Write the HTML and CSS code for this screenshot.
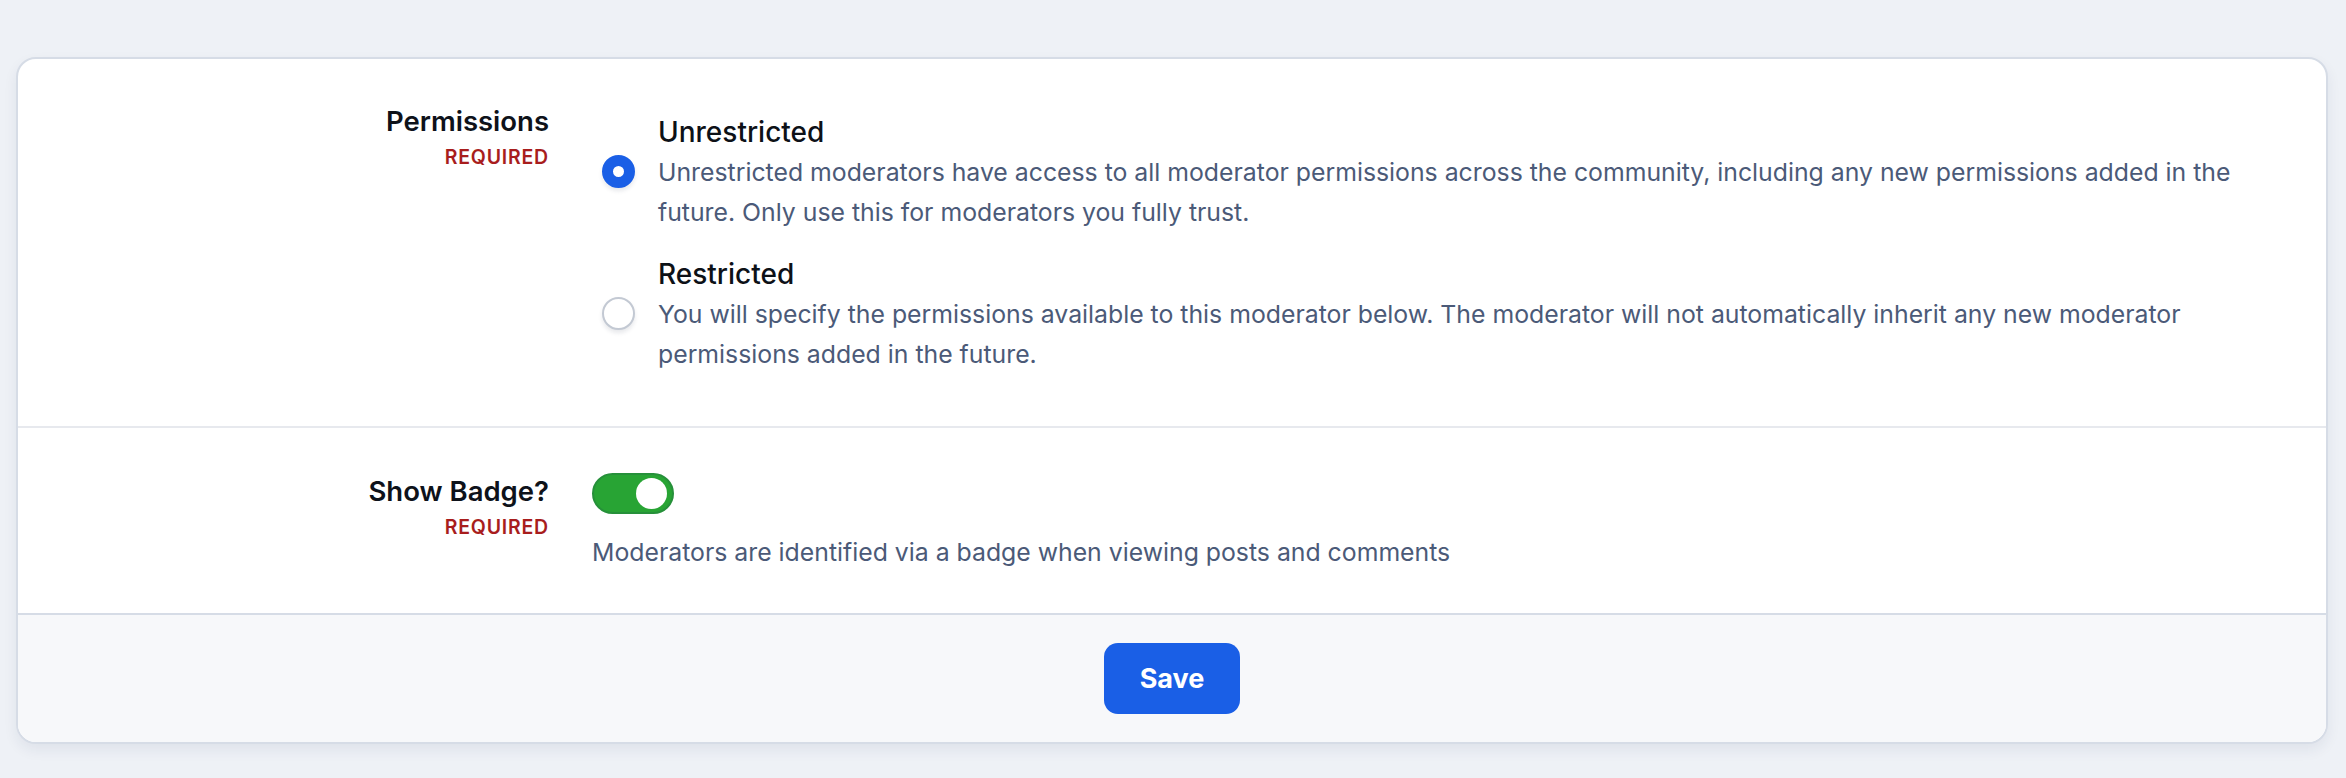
FILE: index.html
```html
<!DOCTYPE html>
<html lang="en">
<head>
<meta charset="utf-8">
<title>Moderator permissions</title>
<link rel="stylesheet" href="styles.css">
</head>
<body>
<div class="page">
  <form class="card">
    <div class="section">
      <div class="label-col">
        <div class="label">Permissions</div>
        <div class="required">Required</div>
      </div>
      <div class="control-col options">
        <label class="option">
          <div class="option-title">Unrestricted</div>
          <span class="radio radio-on"></span>
          <div class="desc">Unrestricted moderators have access to all moderator permissions across the community, including any new permissions added in the future. Only use this for moderators you fully trust.</div>
        </label>
        <label class="option">
          <div class="option-title">Restricted</div>
          <span class="radio"></span>
          <div class="desc">You will specify the permissions available to this moderator below. The moderator will not automatically inherit any new moderator permissions added in the future.</div>
        </label>
      </div>
    </div>
    <div class="section section-badge">
      <div class="label-col">
        <div class="label">Show Badge?</div>
        <div class="required">Required</div>
      </div>
      <div class="control-col">
        <span class="toggle"><span class="knob"></span></span>
        <div class="desc toggle-desc">Moderators are identified via a badge when viewing posts and comments</div>
      </div>
    </div>
    <div class="footer">
      <button type="button" class="save">Save</button>
    </div>
  </form>
</div>
</body>
</html>
```

FILE: styles.css
```css
* { box-sizing: border-box; }
html, body { margin: 0; padding: 0; }
body {
  background: #eef1f6;
  font-family: Inter, "Noto Sans", "Liberation Sans", sans-serif;
  width: 2346px;
  height: 778px;
  overflow: hidden;
}
.page {
  padding: 57px 18px 0 16px;
}
.card {
  background: #ffffff;
  border: 2px solid #d6dce6;
  border-radius: 20px;
  box-shadow: 0 6px 14px rgba(30, 45, 80, 0.07);
  overflow: hidden;
}
.section {
  display: grid;
  grid-template-columns: 531px 1fr;
  column-gap: 43px;
  padding: 44px 76px 52px 0;
  border-bottom: 2px solid #e7e9ee;
}
.section-badge {
  padding: 45px 76px 41px 0;
  border-bottom: none;
}
.label-col {
  text-align: right;
}
.label {
  font-size: 27.5px;
  font-weight: 600;
  line-height: 36px;
  color: #0e121a;
}
.required {
  font-size: 19.5px;
  font-weight: 600;
  line-height: 36px;
  letter-spacing: 0.8px;
  text-transform: uppercase;
  color: #a81d1d;
}
.options {
  display: flex;
  flex-direction: column;
  gap: 22px;
  padding-top: 9px;
}
.option {
  display: grid;
  grid-template-columns: 33px 1fr;
  column-gap: 23px;
  padding-left: 10px;
}
.option-title {
  grid-column: 2;
  font-size: 28px;
  font-weight: 500;
  line-height: 40px;
  color: #0d1117;
}
.radio {
  grid-column: 1;
  grid-row: 2;
  width: 33px;
  height: 33px;
  margin-top: 3px;
  border-radius: 50%;
  background: #ffffff;
  border: 2px solid #c3c9d3;
  box-shadow: 0 3px 4px rgba(20, 30, 60, 0.10);
}
.radio-on {
  background: #ffffff;
  border: 11px solid #1a5fe6;
}
.desc {
  grid-column: 2;
  font-size: 24.8px;
  line-height: 40px;
  color: #4b5a78;
}
.toggle {
  display: flex;
  justify-content: flex-end;
  align-items: center;
  width: 82px;
  height: 41px;
  padding: 0 5px;
  border-radius: 21px;
  background: #28a434;
  border: 2px solid #26903a;
}
.knob {
  width: 31px;
  height: 31px;
  border-radius: 50%;
  background: #ffffff;
}
.toggle-desc {
  margin-top: 18px;
}
.footer {
  display: flex;
  justify-content: center;
  align-items: center;
  height: 129px;
  background: #f7f8fa;
  border-top: 2px solid #d6dce6;
}
.save {
  width: 136px;
  height: 71px;
  border: none;
  border-radius: 14px;
  background: #1a5fe6;
  color: #ffffff;
  font-family: Inter, "Noto Sans", "Liberation Sans", sans-serif;
  font-size: 27px;
  font-weight: 700;
}
```
